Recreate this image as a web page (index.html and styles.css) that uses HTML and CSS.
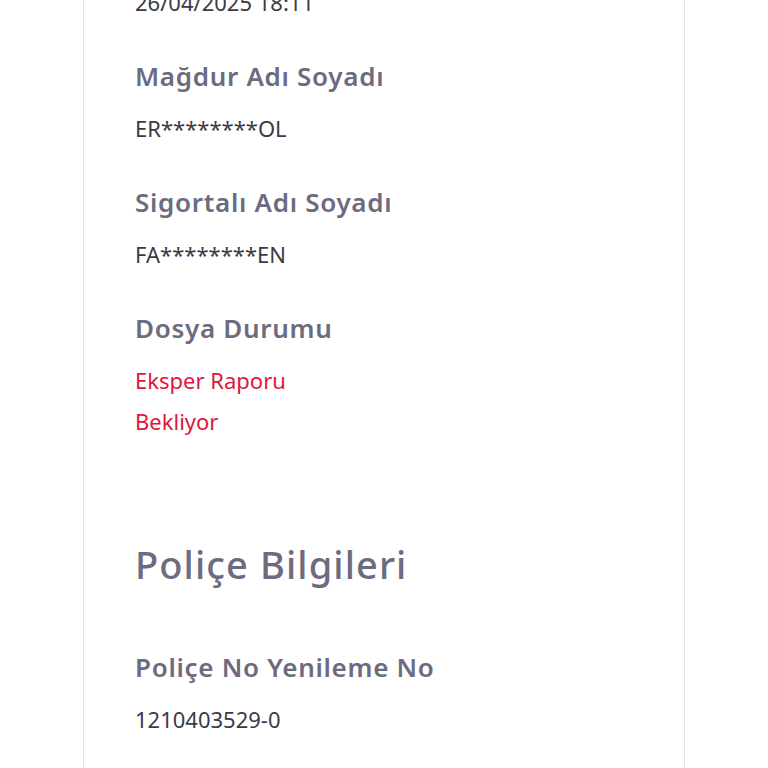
FILE: index.html
```html
<!DOCTYPE html>
<html lang="tr">
<head>
<meta charset="utf-8">
<title>Hasar Dosyası</title>
<link rel="stylesheet" href="styles.css">
</head>
<body>
<div class="page">
  <div class="card">
    <div class="item">
      <div class="value">26/04/2025 18:11</div>
    </div>
    <div class="item">
      <div class="label">Mağdur Adı Soyadı</div>
      <div class="value">ER********OL</div>
    </div>
    <div class="item">
      <div class="label">Sigortalı Adı Soyadı</div>
      <div class="value">FA********EN</div>
    </div>
    <div class="item">
      <div class="label">Dosya Durumu</div>
      <div class="value status">Eksper Raporu Bekliyor</div>
    </div>
    <h2 class="section-title">Poliçe Bilgileri</h2>
    <div class="item">
      <div class="label">Poliçe No Yenileme No</div>
      <div class="value">1210403529-0</div>
    </div>
  </div>
</div>
</body>
</html>
```

FILE: styles.css
```css
html, body {
  margin: 0;
  padding: 0;
  background: #ffffff;
}
body {
  font-family: "Noto Sans", "Open Sans", sans-serif;
  overflow: hidden;
}
.page {
  padding-left: 83px;
}
.card {
  width: 602px;
  box-sizing: border-box;
  border-left: 1px solid #e4e4e6;
  border-right: 1px solid #e4e4e6;
  padding: 0 40px 100px 51px;
  margin-top: -18px;
  min-height: 900px;
}
.item {
  display: flex;
  flex-direction: column;
  gap: 15px;
  margin-bottom: 36px;
}
.label {
  font-size: 26px;
  line-height: 34px;
  font-weight: 600;
  letter-spacing: 0.7px;
  color: #6c6b80;
}
.value {
  font-size: 22px;
  line-height: 41px;
  color: #3b3b45;
}
.value.status {
  color: #e0163c;
  max-width: 200px;
}
.section-title {
  margin: 100px 0 64px;
  font-size: 38px;
  line-height: 44px;
  font-weight: 500;
  letter-spacing: 1.1px;
  color: #6c6b80;
}
```
